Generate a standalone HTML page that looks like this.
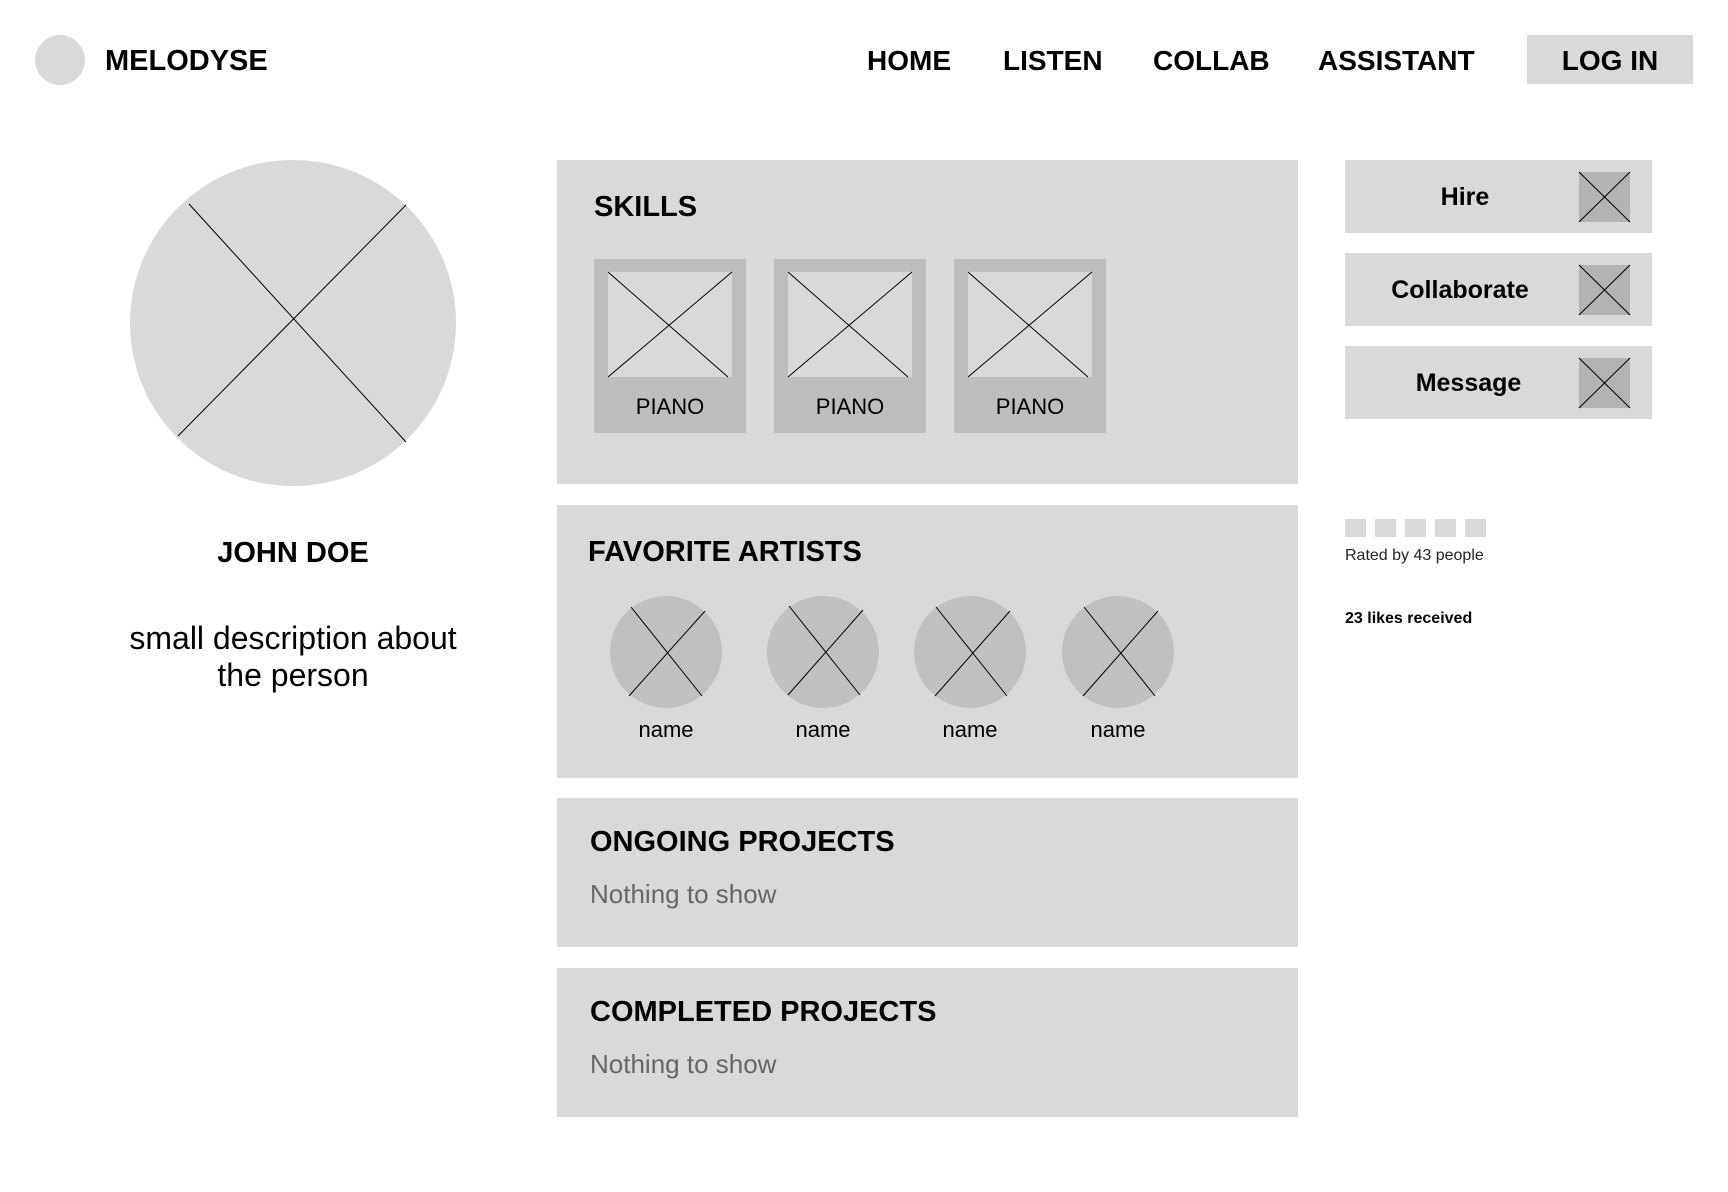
<!DOCTYPE html>
<html><head><meta charset="utf-8"><style>
*{margin:0;padding:0;box-sizing:border-box}
body{width:1728px;height:1192px;background:#fff;position:relative;overflow:hidden;font-family:"Liberation Sans",Arial,sans-serif;color:#000}
.t{position:absolute;white-space:nowrap;line-height:1}
.b{font-weight:bold}
svg{position:absolute;left:0;top:0}
</style></head><body>
<svg width="1728" height="1192" viewBox="0 0 1728 1192">
<circle cx="60" cy="60" r="25" fill="#d9d9d9"/>
<rect x="1527" y="35" width="166" height="49" fill="#d9d9d9"/>
<circle cx="293" cy="323" r="163" fill="#d9d9d9"/>
<g stroke="#000" stroke-width="1"><line x1="189" y1="204" x2="406" y2="442"/><line x1="178" y1="436" x2="406" y2="205"/></g>
<rect x="557" y="160" width="741" height="324" fill="#d9d9d9"/>
<g>
<rect x="594" y="259" width="152" height="174" fill="#bdbdbd"/><rect x="608" y="272" width="124" height="105" fill="#d9d9d9"/>
<rect x="774" y="259" width="152" height="174" fill="#bdbdbd"/><rect x="788" y="272" width="124" height="105" fill="#d9d9d9"/>
<rect x="954" y="259" width="152" height="174" fill="#bdbdbd"/><rect x="968" y="272" width="124" height="105" fill="#d9d9d9"/>
</g>
<g stroke="#000" stroke-width="1">
<line x1="608" y1="272" x2="728" y2="377"/><line x1="608" y1="377" x2="732" y2="272"/>
<line x1="788" y1="272" x2="908" y2="377"/><line x1="788" y1="377" x2="912" y2="272"/>
<line x1="968" y1="272" x2="1088" y2="377"/><line x1="968" y1="377" x2="1092" y2="272"/>
</g>
<rect x="557" y="505" width="741" height="273" fill="#d9d9d9"/>
<g fill="#c0c0c0"><circle cx="666" cy="652" r="56"/><circle cx="823" cy="652" r="56"/><circle cx="970" cy="652" r="56"/><circle cx="1118" cy="652" r="56"/></g>
<g stroke="#000" stroke-width="1">
<line x1="631" y1="607" x2="702" y2="696"/><line x1="629" y1="696" x2="705" y2="611"/>
<line x1="789" y1="606" x2="860" y2="695"/><line x1="788" y1="695" x2="863" y2="610"/>
<line x1="936" y1="607" x2="1007" y2="696"/><line x1="935" y1="696" x2="1010" y2="611"/>
<line x1="1084" y1="607" x2="1155" y2="696"/><line x1="1083" y1="696" x2="1158" y2="611"/>
</g>
<rect x="557" y="798" width="741" height="149" fill="#d9d9d9"/>
<rect x="557" y="968" width="741" height="149" fill="#d9d9d9"/>
<rect x="1345" y="160" width="307" height="73" fill="#d9d9d9"/>
<rect x="1345" y="253" width="307" height="73" fill="#d9d9d9"/>
<rect x="1345" y="346" width="307" height="73" fill="#d9d9d9"/>
<g fill="#b3b3b3"><rect x="1579" y="172" width="51" height="50"/><rect x="1579" y="265" width="51" height="50"/><rect x="1579" y="358" width="51" height="50"/></g>
<g stroke="#000" stroke-width="1">
<line x1="1579" y1="172" x2="1630" y2="222"/><line x1="1579" y1="222" x2="1630" y2="172"/>
<line x1="1579" y1="265" x2="1630" y2="315"/><line x1="1579" y1="315" x2="1630" y2="265"/>
<line x1="1579" y1="358" x2="1630" y2="408"/><line x1="1579" y1="408" x2="1630" y2="358"/>
</g>
<g fill="#d9d9d9"><rect x="1345" y="519" width="21" height="18"/><rect x="1375" y="519" width="21" height="18"/><rect x="1405" y="519" width="21" height="18"/><rect x="1435" y="519" width="21" height="18"/><rect x="1465" y="519" width="21" height="18"/></g>
</svg>

<div class="t b" style="left:105px;top:47px;font-size:29px">MELODYSE</div>
<div class="t b" style="left:867px;top:47px;font-size:28px">HOME</div>
<div class="t b" style="left:1003px;top:47px;font-size:28px">LISTEN</div>
<div class="t b" style="left:1153px;top:47px;font-size:28px">COLLAB</div>
<div class="t b" style="left:1318px;top:47px;font-size:28px">ASSISTANT</div>
<div class="t b" style="left:1527px;width:166px;text-align:center;top:47px;font-size:28px">LOG IN</div>

<div class="t b" style="left:143px;width:300px;text-align:center;top:539px;font-size:29px">JOHN DOE</div>
<div class="t" style="left:73px;width:440px;text-align:center;top:620px;font-size:32px;line-height:37px;white-space:normal">small description about<br>the person</div>

<div class="t b" style="left:594px;top:193px;font-size:29px">SKILLS</div>
<div class="t" style="left:594px;width:152px;text-align:center;top:396px;font-size:22px">PIANO</div>
<div class="t" style="left:774px;width:152px;text-align:center;top:396px;font-size:22px">PIANO</div>
<div class="t" style="left:954px;width:152px;text-align:center;top:396px;font-size:22px">PIANO</div>

<div class="t b" style="left:588px;top:538px;font-size:29px">FAVORITE ARTISTS</div>
<div class="t" style="left:606px;width:120px;text-align:center;top:719px;font-size:22px">name</div>
<div class="t" style="left:763px;width:120px;text-align:center;top:719px;font-size:22px">name</div>
<div class="t" style="left:910px;width:120px;text-align:center;top:719px;font-size:22px">name</div>
<div class="t" style="left:1058px;width:120px;text-align:center;top:719px;font-size:22px">name</div>

<div class="t b" style="left:590px;top:828px;font-size:29px">ONGOING PROJECTS</div>
<div class="t" style="left:590px;top:881px;font-size:26px;color:#666">Nothing to show</div>
<div class="t b" style="left:590px;top:998px;font-size:29px">COMPLETED PROJECTS</div>
<div class="t" style="left:590px;top:1051px;font-size:26px;color:#666">Nothing to show</div>

<div class="t b" style="left:1345px;width:240px;text-align:center;top:185px;font-size:25px">Hire</div>
<div class="t b" style="left:1345px;width:230px;text-align:center;top:278px;font-size:25px">Collaborate</div>
<div class="t b" style="left:1345px;width:247px;text-align:center;top:371px;font-size:25px">Message</div>

<div class="t" style="left:1345px;top:548px;font-size:16px;color:#222">Rated by 43 people</div>
<div class="t b" style="left:1345px;top:611px;font-size:16px">23 likes received</div>
</body></html>
